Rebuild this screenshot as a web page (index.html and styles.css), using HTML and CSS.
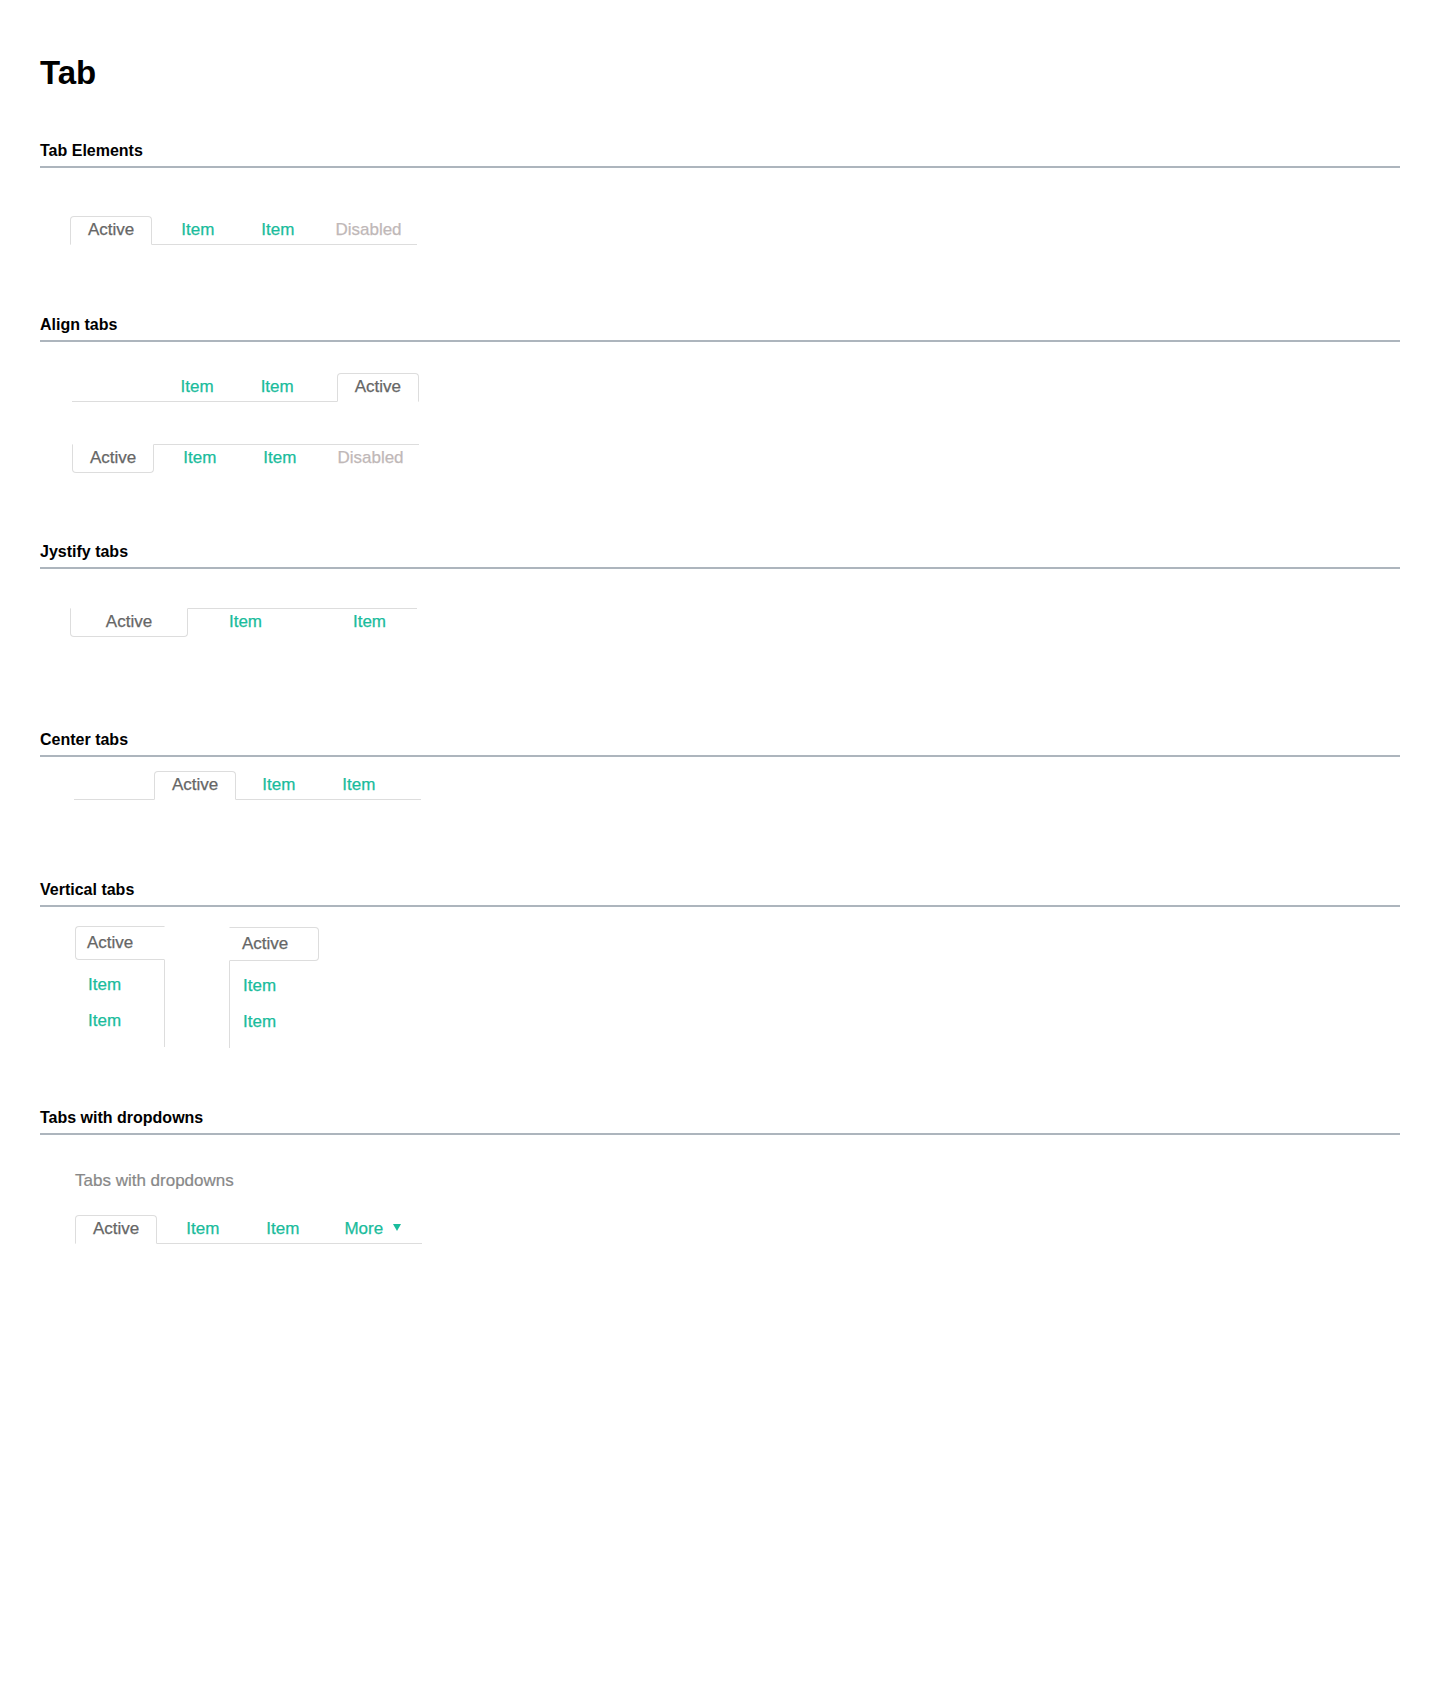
FILE: index.html
```html
<!DOCTYPE html>
<html lang="en">
<head>
    <meta charset="UTF-8">
    <meta name="viewport" content="width=device-width, initial-scale=1.0">
    <title>Tab</title>
    <link rel="stylesheet" href="styles.css">
</head>
<body>
    <div class="page">
        <h1>Tab</h1>

        <!-- elements -->
        <section>
            <h2>Tab Elements</h2>
            <div class="demo demo-elements">
                <ul class="tabs">
                    <li class="active">Active</li>
                    <li>Item</li>
                    <li>Item</li>
                    <li class="disabled">Disabled</li>
                </ul>
            </div>
        </section>

        <!-- align -->
        <section>
            <h2>Align tabs</h2>
            <div class="demo demo-align">
                <ul class="tabs tabs-right">
                    <li>Item</li>
                    <li>Item</li>
                    <li class="active">Active</li>
                </ul>
                <ul class="tabs tabs-bottom">
                    <li class="active">Active</li>
                    <li>Item</li>
                    <li>Item</li>
                    <li class="disabled">Disabled</li>
                </ul>
            </div>
        </section>

        <!-- justify -->
        <section>
            <h2>Jystify tabs</h2>
            <div class="demo demo-justify">
                <ul class="tabs tabs-bottom tabs-justify">
                    <li class="active">Active</li>
                    <li>Item</li>
                    <li>Item</li>
                </ul>
            </div>
        </section>

        <!-- center -->
        <section>
            <h2>Center tabs</h2>
            <div class="demo demo-center">
                <ul class="tabs tabs-center">
                    <li class="active">Active</li>
                    <li>Item</li>
                    <li>Item</li>
                </ul>
            </div>
        </section>

        <!-- vertical -->
        <section>
            <h2>Vertical tabs</h2>
            <div class="demo demo-vertical">
                <ul class="vtabs vtabs-left">
                    <li class="active">Active</li>
                    <li>Item</li>
                    <li>Item</li>
                </ul>
                <ul class="vtabs vtabs-right">
                    <li class="active">Active</li>
                    <li>Item</li>
                    <li>Item</li>
                </ul>
            </div>
        </section>

        <!-- dropdowns -->
        <section>
            <h2>Tabs with dropdowns</h2>
            <div class="demo demo-dropdown">
                <p class="caption">Tabs with dropdowns</p>
                <ul class="tabs">
                    <li class="active">Active</li>
                    <li>Item</li>
                    <li>Item</li>
                    <li class="dropdown">More<span class="caret"></span></li>
                </ul>
            </div>
        </section>
    </div>
</body>
</html>
```

FILE: styles.css
```css
* {
    font-family: 'Liberation Sans', Arial, Helvetica, sans-serif;
    box-sizing: border-box;
}
body {
    margin: 0;
    background: #fff;
    color: #000;
}
.page {
    padding: 0 40px;
}
h1 {
    font-size: 33px;
    line-height: 40px;
    font-weight: bold;
    margin: 53px 0 48px;
}
h2 {
    font-size: 16px;
    line-height: 20px;
    font-weight: bold;
    margin: 0;
    padding-bottom: 5px;
    border-bottom: 2px solid #adb5bd;
}

/* demo blocks */
.demo-elements {
    padding: 48px 0 70px 30px;
}
.demo-align {
    padding: 31px 0 69px 32px;
}
.demo-align .tabs-bottom {
    margin-top: 42px;
}
.demo-justify {
    padding: 39px 0 93px 30px;
}
.demo-center {
    padding: 14px 0 80px 34px;
}
.demo-vertical {
    display: flex;
    align-items: flex-start;
    gap: 64px;
    padding: 19px 0 60px 35px;
}
.demo-dropdown {
    padding: 36px 0 0 35px;
}
.caption {
    margin: 0 0 24px;
    font-size: 17px;
    line-height: 20px;
    color: #888;
    -webkit-text-stroke: 0.2px #888;
}

/* horizontal tabs */
.tabs {
    display: flex;
    width: 347px;
    margin: 0;
    padding: 0;
    list-style: none;
    border-bottom: 1px solid #ddd;
}
.tabs li {
    flex-shrink: 0;
    white-space: nowrap;
    margin: 0 0 -1px 11px;
    padding: 3px 17px 4px;
    font-size: 17px;
    line-height: 20px;
    color: #1abc9c;
    -webkit-text-stroke: 0.25px currentColor;
    border: 1px solid transparent;
    cursor: pointer;
}
.tabs li:first-child {
    margin-left: 0;
}
.tabs li.active {
    color: #666;
    background: #fff;
    border-color: #ddd;
    border-bottom-color: #fff;
    border-radius: 4px 4px 0 0;
}
.tabs li.disabled {
    color: #bfb8b8;
    padding-left: 11px;
    cursor: default;
}
.tabs li.dropdown {
    margin-left: 9px;
}
.tabs-right {
    justify-content: flex-end;
}
.tabs-right li.active {
    margin-left: 25px;
}
.tabs-bottom {
    border-bottom: none;
    border-top: 1px solid #ddd;
}
.tabs-bottom li {
    margin: -1px 0 0 11px;
}
.tabs-bottom li.active {
    border-color: #ddd;
    border-top-color: #fff;
    border-radius: 0 0 4px 4px;
}
.tabs-justify li {
    flex: 0 0 115px;
    margin-left: 0;
    padding-left: 0;
    padding-right: 0;
    text-align: center;
}
.tabs-justify li.active {
    flex-basis: 118px;
}
.tabs-justify li:last-child {
    flex: 1 1 auto;
    padding-left: 19px;
}
.tabs-center {
    padding-left: 80px;
}
.tabs-center li.active {
    margin-right: -3px;
}
.caret {
    display: inline-block;
    width: 0;
    height: 0;
    margin-left: 10px;
    border-left: 4px solid transparent;
    border-right: 4px solid transparent;
    border-top: 7px solid #1abc9c;
    vertical-align: 3px;
}

/* vertical tabs */
.vtabs {
    width: 90px;
    margin: 0;
    padding: 0 0 8px;
    list-style: none;
}
.vtabs li {
    padding: 7px 12px;
    font-size: 17px;
    line-height: 20px;
    color: #1abc9c;
    -webkit-text-stroke: 0.25px currentColor;
    border: 1px solid transparent;
}
.vtabs li.active {
    padding: 6px 11px;
    color: #666;
    background: #fff;
    border-color: #ddd;
    margin-bottom: 7px;
}
.vtabs-left {
    border-right: 1px solid #ddd;
}
.vtabs-left li.active {
    margin-right: -1px;
    border-right-color: transparent;
    border-radius: 4px 0 0 4px;
}
.vtabs-right {
    margin-top: 1px;
    border-left: 1px solid #ddd;
}
.vtabs-right li.active {
    margin-left: -1px;
    border-left-color: transparent;
    border-radius: 0 4px 4px 0;
    padding-left: 12px;
}
```
